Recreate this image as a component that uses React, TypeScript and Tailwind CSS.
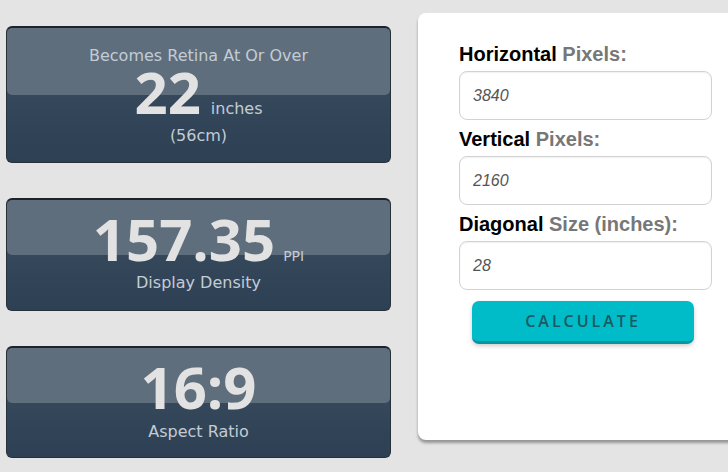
import React from "react";

function StatCard({
  height,
  children,
}: {
  height: string;
  children: React.ReactNode;
}) {
  return (
    <div
      className={`relative w-[385px] ${height} overflow-hidden rounded-[6px] border border-[#26313c] border-t-2 border-t-[#1f2327] bg-gradient-to-b from-[#3e4f60] to-[#2d4054]`}
    >
      {/* gloss on the top half */}
      <div className="absolute inset-x-0 top-0 h-1/2 rounded-[5px] bg-[#5f6e7d]" />
      <div className="relative flex h-full flex-col items-center">{children}</div>
    </div>
  );
}

function Field({
  strong,
  rest,
  value,
}: {
  strong: string;
  rest: string;
  value: string;
}) {
  return (
    <div className="flex flex-col">
      <label className="mb-[5px] text-[20px] font-bold leading-[23px] text-black">
        {strong} <span className="text-[#777]">{rest}</span>
      </label>
      <input
        type="text"
        defaultValue={value}
        className="h-[49px] w-[253px] rounded-[8px] border border-[#d2d2d2] bg-white px-[13px] text-[16px] italic text-[#555] shadow-[inset_0_1px_2px_rgba(0,0,0,0.06)] outline-none"
      />
    </div>
  );
}

export default function App() {
  const sans = { fontFamily: "'DejaVu Sans', Verdana, sans-serif" };
  const big = { fontFamily: "'Open Sans', sans-serif" };

  return (
    <main
      className="flex h-[472px] w-[728px] overflow-hidden bg-[#e4e4e4]"
      style={{ fontFamily: "'Liberation Sans', Arial, sans-serif" }}
    >
      {/* Results */}
      <div className="flex flex-col gap-[35px] pl-[6px] pt-[26px]" style={sans}>
        <StatCard height="h-[137px]">
          <div className="mt-[18px] text-[16px] leading-[20px] text-[#c3ccd5]">
            Becomes Retina At Or Over
          </div>
          <div className="flex items-baseline">
            <span
              className="text-[58px] font-bold leading-[52px] text-[#e2e2e2]"
              style={big}
            >
              22
            </span>
            <span className="ml-[10px] text-[16px] leading-none text-[#c3ccd5]">
              inches
            </span>
          </div>
          <div className="mt-[8px] text-[16px] leading-[20px] text-[#c3ccd5]">
            (56cm)
          </div>
        </StatCard>

        <StatCard height="h-[113px]">
          <div className="mt-[8px] flex items-baseline">
            <span
              className="text-[58px] font-bold leading-[62px] text-[#e2e2e2]"
              style={big}
            >
              157.35
            </span>
            <span className="ml-[8px] text-[14px] leading-none text-[#c3ccd5]">
              PPI
            </span>
          </div>
          <div className="mt-[3px] text-[16px] leading-[20px] text-[#c3ccd5]">
            Display Density
          </div>
        </StatCard>

        <StatCard height="h-[112px]">
          <div className="mt-[8px] flex items-baseline">
            <span
              className="text-[58px] font-bold leading-[62px] text-[#e2e2e2]"
              style={big}
            >
              16:9
            </span>
          </div>
          <div className="mt-[4px] text-[16px] leading-[20px] text-[#c3ccd5]">
            Aspect Ratio
          </div>
        </StatCard>
      </div>

      {/* Calculator form */}
      <div className="ml-[27px] mt-[13px] h-[427px] w-[340px] shrink-0 rounded-[8px] bg-white pl-[41px] pt-[30px] shadow-[0_3px_3px_rgba(0,0,0,0.35)]">
        <div className="flex flex-col gap-[8px]">
          <Field strong="Horizontal" rest="Pixels:" value="3840" />
          <Field strong="Vertical" rest="Pixels:" value="2160" />
          <Field strong="Diagonal" rest="Size (inches):" value="28" />
        </div>
        <button
          className="ml-[13px] mt-[11px] h-[43px] w-[222px] rounded-[7px] border-b-[3px] border-[#0097a1] bg-[#00bcc8] text-[16px] font-semibold uppercase tracking-[3px] text-[#1a5a62] shadow-[0_2px_4px_rgba(0,0,0,0.2)]"
          style={{ fontFamily: "'Open Sans', sans-serif" }}
        >
          Calculate
        </button>
      </div>
    </main>
  );
}
